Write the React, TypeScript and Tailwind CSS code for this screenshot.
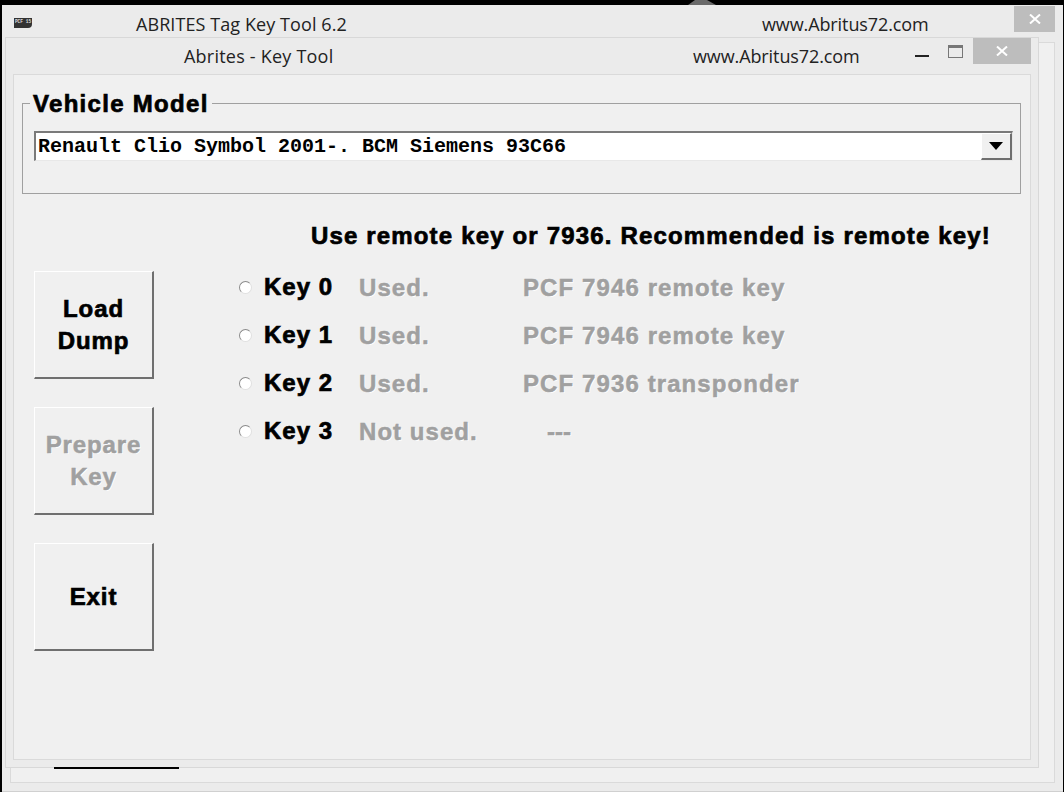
function Btn({ lines, disabled }: { lines: string[]; disabled?: boolean }) {
  return (
    <div className="w-[120px] h-[108px] flex flex-col items-center justify-center border border-t-[#ffffff] border-l-[#ffffff] border-r-2 border-b-2 border-r-[#6f6f6f] border-b-[#6f6f6f] bg-[#f0f0f0]">
      {lines.map((l) => (
        <div
          key={l}
          className={
            "font-['Liberation_Sans',Arial,sans-serif] font-bold text-[24px] leading-[32px] tracking-[0.9px] " +
            (disabled
              ? "text-[#a0a0a0] [-webkit-text-stroke:0.5px_#a0a0a0] [text-shadow:1px_1px_0_#ffffff]"
              : "text-black [-webkit-text-stroke:0.7px_#000]")
          }
        >
          {l}
        </div>
      ))}
    </div>
  );
}

function KeyRow({ k, st, desc, off }: { k: string; st: string; desc: string; off?: boolean }) {
  const grey =
    "pt-[2px] font-['Liberation_Sans',Arial,sans-serif] font-bold text-[24px] leading-[48px] text-[#a0a0a0] [-webkit-text-stroke:0.5px_#a0a0a0] [text-shadow:1px_1px_0_#ffffff] whitespace-nowrap";
  return (
    <div className="flex items-center h-[48px]">
      <div className="ml-[1px] w-[13px] h-[13px] rounded-full bg-white border border-[#8a8a8a] border-r-[#e0e0e0] border-b-[#e0e0e0] mr-[12px]" />
      <div className="w-[95px] font-['Liberation_Sans',Arial,sans-serif] font-bold text-[24px] leading-[48px] tracking-[1px] text-black [-webkit-text-stroke:0.7px_#000] whitespace-nowrap">
        {k}
      </div>
      <div className={"w-[164px] tracking-[1.05px] " + grey}>{st}</div>
      <div className={(off ? "pl-[24px] tracking-[0px] " : "tracking-[1.1px] ") + grey}>{desc}</div>
    </div>
  );
}

export default function App() {
  return (
    <div className="relative w-[1064px] h-[792px] overflow-hidden bg-black pt-[5px] pl-[2px] pr-[1px]">
      <svg className="absolute left-[686px] top-0" width="32" height="5" viewBox="0 0 32 5">
        <path d="M2 5 L9 0 H21 L30 5 Z" fill="#6a6a6a" />
      </svg>
      {/* back window */}
      <div className="relative h-[787px] bg-[#ebebeb] border-b border-[#d0d0d0]">
        <div className="flex h-[37px] items-start">
          <div className="mt-[13px] ml-[12px] shrink-0 w-[18px] h-[10px] bg-[#333] rounded-br-[4px] font-['Liberation_Mono',monospace] font-bold text-[4.5px] leading-[7px] text-[#ddd] text-center whitespace-nowrap">
            PCF 15
          </div>
          <div className="ml-[104px] mt-[7px] w-[626px] font-['Open_Sans',sans-serif] text-[18px] leading-[24px] tracking-[0.08px] text-[#222] whitespace-nowrap">
            ABRITES Tag Key Tool 6.2
          </div>
          <div className="font-['Open_Sans',sans-serif] text-[18px] leading-[24px] tracking-[-0.1px] mt-[7px] text-[#222] whitespace-nowrap">
            www.Abritus72.com
          </div>
          <div className="ml-auto mr-[8px] mt-[1px] w-[41px] h-[26px] bg-[#bdbdbd] flex items-center justify-center">
            <svg width="12" height="10" viewBox="0 0 12 10">
              <path d="M1 0.5 L11 9.5 M11 0.5 L1 9.5" stroke="#fff" strokeWidth="2" />
            </svg>
          </div>
        </div>
        <div className="mx-[8px] h-[741px] bg-[#f0f0f0] border border-[#dadada]" />
      </div>

      {/* front window */}
      <div className="absolute left-[5px] top-[37px] w-[1034px] h-[731px] bg-[#ebebeb] border border-[#d8d8d8] flex flex-col">
        <div className="flex h-[36px] items-start shrink-0">
          <div className="ml-[178px] mt-[6px] w-[509px] font-['Open_Sans',sans-serif] text-[18px] leading-[24px] tracking-[0.22px] text-[#222] whitespace-nowrap">
            Abrites - Key Tool
          </div>
          <div className="font-['Open_Sans',sans-serif] text-[18px] leading-[24px] tracking-[-0.1px] mt-[6px] text-[#222] whitespace-nowrap">
            www.Abritus72.com
          </div>
          <div className="ml-auto flex items-start mr-[7px]">
            <div className="w-[14px] h-[2px] bg-[#222] mt-[17px] mr-[19px]" />
            <div className="w-[15px] h-[13px] mt-[7px] mr-[10px] border border-[#777] border-t-[3px]" />
            <div className="w-[58px] h-[26px] bg-[#bdbdbd] flex items-center justify-center">
              <svg width="12" height="10" viewBox="0 0 12 10">
                <path d="M1 0.5 L11 9.5 M11 0.5 L1 9.5" stroke="#fff" strokeWidth="2" />
              </svg>
            </div>
          </div>
        </div>

        <div className="relative mx-[7px] h-[686px] bg-[#f0f0f0] border border-[#dadada] pt-[28px] pl-[8px] pr-[9px]">
          {/* group box */}
          <div className="relative h-[91px] border border-[#a0a0a0] pl-[11px] pr-[7px] pt-[27px]">
            <div className="absolute left-[7px] -top-[14px] bg-[#f0f0f0] px-[3px] font-['Liberation_Sans',Arial,sans-serif] font-bold text-[24px] leading-[28px] tracking-[1.3px] text-black [-webkit-text-stroke:0.7px_#000] whitespace-nowrap">
              Vehicle Model
            </div>
            <div className="h-[30px] flex items-stretch bg-white border-t-2 border-l-2 border-t-[#7a7a7a] border-l-[#7a7a7a] border-b border-r border-b-[#e8e8e8] border-r-[#e8e8e8]">
              <div className="flex-1 pl-[2px] pt-[1px] font-['Liberation_Mono','Courier_New',monospace] font-bold text-[20px] leading-[25px] text-black whitespace-nowrap">
                Renault Clio Symbol 2001-. BCM Siemens 93C66
              </div>
              <div className="w-[31px] h-[27px] bg-[#f0f0f0] border border-t-white border-l-white border-r-2 border-b-2 border-r-[#6f6f6f] border-b-[#6f6f6f] flex items-center justify-center">
                <svg width="14" height="8" viewBox="0 0 14 8">
                  <path d="M0 0 H14 L7 8 Z" fill="#000" />
                </svg>
              </div>
            </div>
          </div>

          <div className="mt-[26px] pr-[30px] text-right font-['Liberation_Sans',Arial,sans-serif] font-bold text-[24px] leading-[32px] tracking-[1.17px] text-black [-webkit-text-stroke:0.7px_#000] whitespace-nowrap">
            Use remote key or 7936. Recommended is remote key!
          </div>

          <div className="flex mt-[19px] pl-[12px]">
            <div className="flex flex-col gap-[28px]">
              <Btn lines={["Load", "Dump"]} />
              <Btn lines={["Prepare", "Key"]} disabled />
              <Btn lines={["Exit"]} />
            </div>
            <div className="ml-[84px] -mt-[8px]">
              <KeyRow k="Key 0" st="Used." desc="PCF 7946 remote key" />
              <KeyRow k="Key 1" st="Used." desc="PCF 7946 remote key" />
              <KeyRow k="Key 2" st="Used." desc="PCF 7936 transponder" />
              <KeyRow k="Key 3" st="Not used." desc="---" off />
            </div>
          </div>
        </div>
        <div className="absolute left-[48px] -bottom-[2px] w-[125px] h-[2px] bg-black" />
      </div>
    </div>
  );
}
